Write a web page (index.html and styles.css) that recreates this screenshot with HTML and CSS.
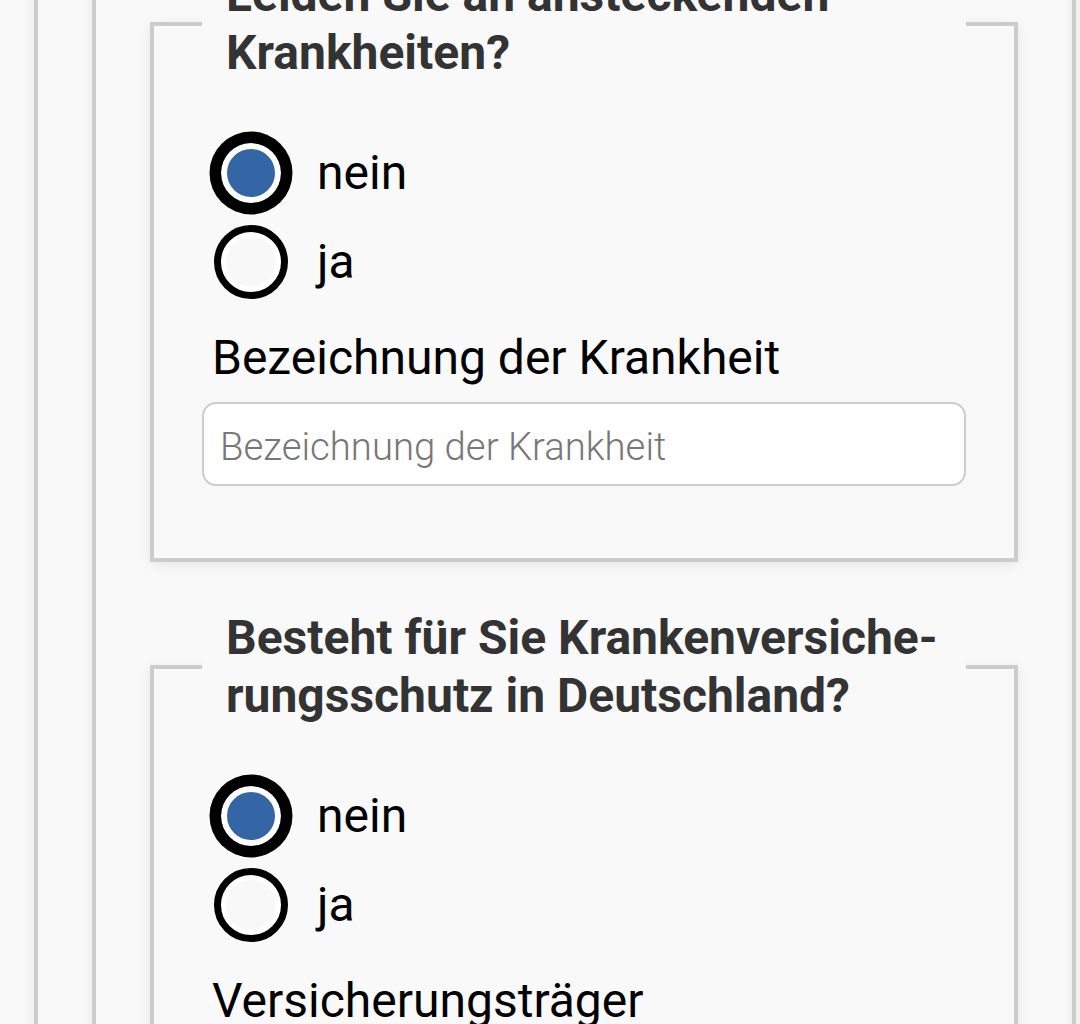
FILE: index.html
```html
<!DOCTYPE html>
<html lang="de">
<head>
<meta charset="utf-8">
<title>Fragebogen</title>
<link rel="stylesheet" href="styles.css">
</head>
<body>
<div class="outer">
  <div class="inner">
    <fieldset class="group">
      <legend class="group-title">Leiden Sie an ansteckenden<br>Krankheiten?</legend>
      <div class="options">
        <label class="option"><input type="radio" name="q1" class="radio" checked><span class="option-text">nein</span></label>
        <label class="option"><input type="radio" name="q1" class="radio"><span class="option-text">ja</span></label>
      </div>
      <label class="field-label" for="krankheit">Bezeichnung der Krankheit</label>
      <input id="krankheit" class="text-input" type="text" placeholder="Bezeichnung der Krankheit">
    </fieldset>
    <fieldset class="group">
      <legend class="group-title">Besteht für Sie Krankenversiche-<br>rungsschutz in Deutschland?</legend>
      <div class="options">
        <label class="option"><input type="radio" name="q2" class="radio" checked><span class="option-text">nein</span></label>
        <label class="option"><input type="radio" name="q2" class="radio"><span class="option-text">ja</span></label>
      </div>
      <label class="field-label" for="traeger">Versicherungsträger</label>
      <input id="traeger" class="text-input" type="text" placeholder="Versicherungsträger">
    </fieldset>
  </div>
</div>
</body>
</html>
```
FILE: styles.css
```css
html, body {
  margin: 0;
  padding: 0;
  background: #f9f9f9;
  font-family: Roboto, "Liberation Sans", sans-serif;
  overflow: hidden;
}

.outer {
  margin: -120px 0 0 34px;
  width: 1200px;
  padding: 0 0 0 54px;
  border-left: 4px solid #cccccc;
  box-shadow: 0 0 12px rgba(0, 0, 0, 0.08);
  background: #f9f9f9;
  box-sizing: border-box;
}

.inner {
  width: 984px;
  box-sizing: border-box;
  padding: 86px 54px 200px 54px;
  border: 4px solid #cccccc;
  border-top: 0;
  box-shadow: 0 0 12px rgba(0, 0, 0, 0.08), inset -10px 0 10px -8px rgba(0, 0, 0, 0.05);
  background: #f9f9f9;
}

.group {
  margin: 0;
  padding: 45.75px 48px 72px 48px;
  border: 4px solid #cccccc;
  background: #f9f9f9;
  box-shadow: 0 3px 12px rgba(0, 0, 0, 0.08);
  min-inline-size: 0;
}

.group + .group {
  margin-top: 47px;
}

.group-title {
  width: 100%;
  box-sizing: border-box;
  padding: 0 24px;
  margin: 0;
  background: #f9f9f9;
  color: #333333;
  font-weight: 700;
  font-size: 48px;
  line-height: 58px;
  white-space: nowrap;
}

.options {
  display: flex;
  flex-direction: column;
}

.option {
  display: flex;
  align-items: center;
  gap: 29px;
  height: 89.5px;
  padding-left: 12px;
}

.radio {
  appearance: none;
  -webkit-appearance: none;
  margin: 0;
  flex: 0 0 auto;
  width: 74px;
  height: 74px;
  box-sizing: border-box;
  border-radius: 50%;
  border: 7px solid #000000;
  background: #f8f8f8;
  box-shadow: inset 0 0 0 5px #ffffff;
  outline: none;
}

.radio:checked {
  background: #3465a4;
  box-shadow: 0 0 0 4.5px #000000, inset 0 0 0 6px #ffffff;
}

.option-text {
  font-size: 48px;
  line-height: 56px;
  color: #000000;
}

.field-label {
  display: block;
  margin-top: 23px;
  padding-left: 10px;
  font-size: 48px;
  line-height: 56px;
  color: #000000;
}

.text-input {
  display: block;
  margin-top: 16.5px;
  width: 100%;
  height: 84px;
  box-sizing: border-box;
  border: 2px solid #cccccc;
  border-radius: 14px;
  background: #ffffff;
  padding: 4px 16px 0 16px;
  font-family: Roboto, "Liberation Sans", sans-serif;
  font-weight: 300;
  font-size: 38.3px;
  color: #000000;
  outline: none;
}

.text-input::placeholder {
  color: #777777;
  opacity: 1;
}
```
